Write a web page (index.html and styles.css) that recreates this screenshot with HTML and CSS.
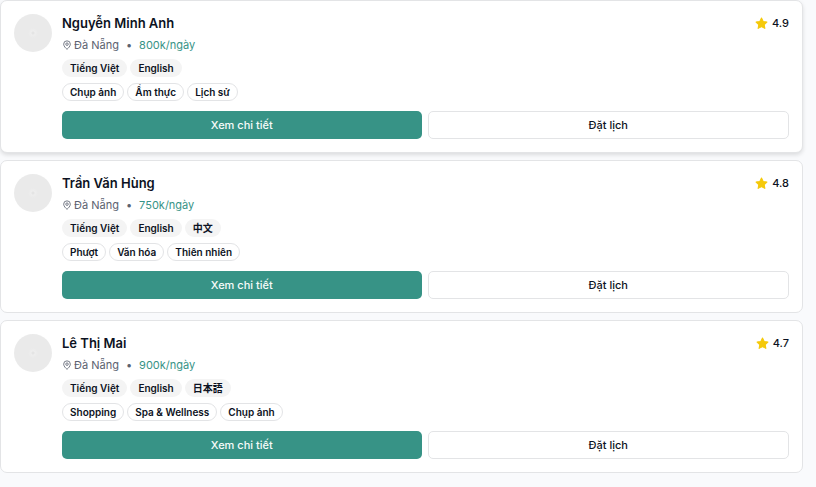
FILE: index.html
```
<!DOCTYPE html>
<html lang="vi">

<head>
    <meta charset="UTF-8">
    <meta name="viewport" content="width=device-width, initial-scale=1.0">
    <title>Hướng dẫn viên Đà Nẵng</title>
    <link rel="stylesheet" href="styles.css">
</head>

<body>
    <svg class="sprite" aria-hidden="true">
        <symbol id="ic-pin" viewBox="0 0 24 24">
            <path d="M20 10c0 5-5.500 10.200-7.400 11.800a1 1 0 0 1-1.200 0C9.500 20.200 4 15 4 10a8 8 0 0 1 16 0z"/>
            <circle cx="12" cy="10" r="3"/>
        </symbol>
        <symbol id="ic-star" viewBox="0 0 24 24">
            <path d="M12 2l3.090 6.260L22 9.270l-5 4.870 1.180 6.880L12 17.770l-6.180 3.250L7 14.140 2 9.270l6.910-1.010z"/>
        </symbol>
    </svg>
    <main class="guide-list">
        <article class="guide-card selected">
            <div class="avatar"></div>
            <div class="guide-body">
                <header class="guide-top">
                    <h3 class="name">Nguyễn Minh Anh</h3>
                    <div class="rating"><svg class="ic-star"><use href="#ic-star"/></svg>4.9</div>
                </header>
                <div class="meta">
                    <svg class="ic-pin"><use href="#ic-pin"/></svg>
                    <span>Đà Nẵng</span>
                    <span class="dot">•</span>
                    <span class="price">800k/ngày</span>
                </div>
                <div class="badges">
                    <span class="badge filled">Tiếng Việt</span>
                    <span class="badge filled">English</span>
                </div>
                <div class="badges">
                    <span class="badge">Chụp ảnh</span>
                    <span class="badge">Ẩm thực</span>
                    <span class="badge">Lịch sử</span>
                </div>
                <div class="actions">
                    <button type="button" class="btn primary">Xem chi tiết</button>
                    <button type="button" class="btn outline">Đặt lịch</button>
                </div>
            </div>
        </article>
        <article class="guide-card">
            <div class="avatar"></div>
            <div class="guide-body">
                <header class="guide-top">
                    <h3 class="name">Trần Văn Hùng</h3>
                    <div class="rating"><svg class="ic-star"><use href="#ic-star"/></svg>4.8</div>
                </header>
                <div class="meta">
                    <svg class="ic-pin"><use href="#ic-pin"/></svg>
                    <span>Đà Nẵng</span>
                    <span class="dot">•</span>
                    <span class="price">750k/ngày</span>
                </div>
                <div class="badges">
                    <span class="badge filled">Tiếng Việt</span>
                    <span class="badge filled">English</span>
                    <span class="badge filled" lang="zh">中文</span>
                </div>
                <div class="badges">
                    <span class="badge">Phượt</span>
                    <span class="badge">Văn hóa</span>
                    <span class="badge">Thiên nhiên</span>
                </div>
                <div class="actions">
                    <button type="button" class="btn primary">Xem chi tiết</button>
                    <button type="button" class="btn outline">Đặt lịch</button>
                </div>
            </div>
        </article>
        <article class="guide-card">
            <div class="avatar"></div>
            <div class="guide-body">
                <header class="guide-top">
                    <h3 class="name">Lê Thị Mai</h3>
                    <div class="rating"><svg class="ic-star"><use href="#ic-star"/></svg>4.7</div>
                </header>
                <div class="meta">
                    <svg class="ic-pin"><use href="#ic-pin"/></svg>
                    <span>Đà Nẵng</span>
                    <span class="dot">•</span>
                    <span class="price">900k/ngày</span>
                </div>
                <div class="badges">
                    <span class="badge filled">Tiếng Việt</span>
                    <span class="badge filled">English</span>
                    <span class="badge filled" lang="ja">日本語</span>
                </div>
                <div class="badges">
                    <span class="badge">Shopping</span>
                    <span class="badge">Spa &amp; Wellness</span>
                    <span class="badge">Chụp ảnh</span>
                </div>
                <div class="actions">
                    <button type="button" class="btn primary">Xem chi tiết</button>
                    <button type="button" class="btn outline">Đặt lịch</button>
                </div>
            </div>
        </article>
    </main>
</body>

</html>
```
FILE: styles.css
```
* {
    box-sizing: border-box;
}

:root {
    --app-background-color: #f9fafc;
    --primary-color: #379386;
    --text-color: #0c1222;
    --muted-color: #5b6270;
    --border-color: #e3e4e6;
}

body {
    margin: 0;
    background-color: var(--app-background-color);
    color: var(--text-color);
    font-family: Inter, 'Noto Sans CJK JP', sans-serif;
    font-size: 11px;
}

.sprite {
    display: none;
}

.guide-list {
    display: flex;
    flex-direction: column;
    gap: 7px;
    padding-right: 13px;
}

.guide-card {
    display: flex;
    gap: 10px;
    padding: 13px;
    background-color: #fff;
    border: 1px solid var(--border-color);
    border-radius: 7px;
}
.guide-card.selected {
    box-shadow: 0 2px 4px rgba(0, 0, 0, 0.12);
}

.avatar {
    flex: none;
    width: 38px;
    height: 38px;
    border-radius: 50%;
    background: radial-gradient(circle, #e4e4e4 1px, #eeeeee 2px, #eaeaea 5px);
}

.guide-body {
    flex: 1;
    min-width: 0;
}

.guide-top {
    display: flex;
    justify-content: space-between;
    align-items: center;
    height: 18px;
}
.name {
    margin: 0;
    font-size: 13px;
    font-weight: 600;
}
.rating {
    display: flex;
    align-items: center;
    gap: 4px;
    font-weight: 500;
}
.ic-star {
    width: 13px;
    height: 13px;
    fill: #f5c90b;
    stroke: #f5c90b;
    stroke-width: 2;
    stroke-linejoin: round;
}

.meta {
    display: flex;
    align-items: center;
    height: 16px;
    margin: 5px 0 6px;
    color: var(--muted-color);
}
.ic-pin {
    width: 10px;
    height: 10px;
    margin-right: 2px;
    fill: none;
    stroke: currentColor;
    stroke-width: 2;
}
.dot {
    margin: 0 7px;
}
.price {
    color: var(--primary-color);
}

.badges {
    display: flex;
    gap: 3px;
    margin-bottom: 6px;
}
.badge {
    height: 18px;
    padding: 0 7px;
    border: 1px solid var(--border-color);
    border-radius: 9px;
    font-size: 10px;
    font-weight: 600;
    line-height: 16px;
}
.badge.filled {
    background-color: #f4f4f4;
    border-color: transparent;
}

.actions {
    display: flex;
    gap: 6px;
    margin-top: 10px;
}
.btn {
    flex: 1;
    height: 28px;
    padding: 0 10px;
    border: 0;
    border-radius: 5px;
    font-family: inherit;
    font-size: 11px;
    font-weight: 500;
    cursor: pointer;
}
.btn.primary {
    background-color: var(--primary-color);
    color: #f6fbfa;
}
.btn.outline {
    background-color: #fff;
    border: 1px solid var(--border-color);
    color: var(--text-color);
}
```
